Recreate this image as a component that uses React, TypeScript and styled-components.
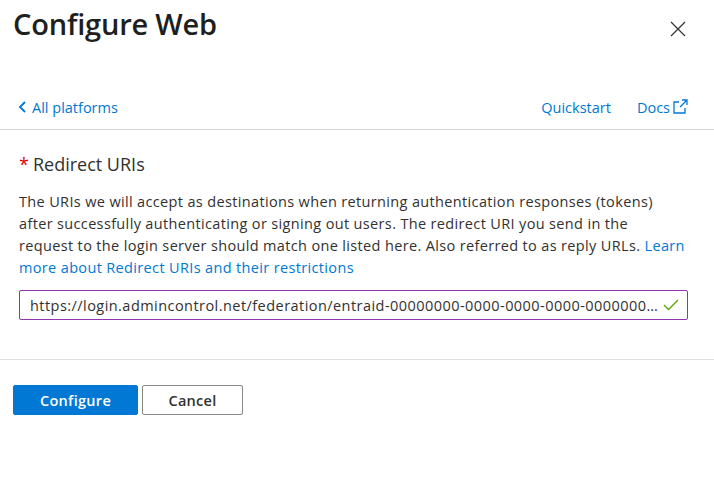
import styled, { createGlobalStyle } from 'styled-components';

const GlobalStyle = createGlobalStyle`
  html, body {
    margin: 0;
    padding: 0;
    background: #fff;
  }
  body {
    font-family: "Open Sans", "Noto Sans", Arial, sans-serif;
    color: #323130;
  }
`;

const Panel = styled.div`
  width: 714px;
  height: 479px;
  background: #fff;
  display: flex;
  flex-direction: column;
`;

const Header = styled.div`
  height: 85px;
  display: flex;
  justify-content: space-between;
  align-items: flex-start;
  padding: 4px 24px 0 13px;
  box-sizing: border-box;
`;

const Title = styled.h1`
  margin: 0;
  font-size: 29px;
  line-height: 40px;
  font-weight: 600;
  color: #201f1e;
  letter-spacing: -0.2px;
`;

const CloseButton = styled.button`
  border: none;
  background: transparent;
  padding: 0;
  margin-top: 13px;
  width: 24px;
  height: 24px;
  display: flex;
  align-items: center;
  justify-content: center;
  cursor: pointer;
`;

const NavRow = styled.div`
  height: 44px;
  display: flex;
  align-items: center;
  justify-content: space-between;
  padding: 0 26px 0 18px;
  border-bottom: 1px solid #d6d6d6;
`;

const LinkGroup = styled.div`
  display: flex;
  align-items: center;
  gap: 26px;
`;

const NavLink = styled.a`
  display: inline-flex;
  align-items: center;
  gap: 5px;
  font-size: 14.5px;
  color: #0078d4;
  text-decoration: none;
  cursor: pointer;
`;

const Body = styled.div`
  padding: 22px 4px 0 19px;
  height: 230px;
  box-sizing: border-box;
  border-bottom: 1px solid #e1dfdd;
`;

const FieldLabel = styled.div`
  font-size: 18px;
  line-height: 24px;
  color: #323130;
  display: flex;
  gap: 4px;
`;

const Required = styled.span`
  color: #e50000;
`;

const Description = styled.p`
  margin: 15px 0 0;
  font-size: 14.5px;
  line-height: 22px;
  letter-spacing: 0.35px;
  color: #323130;
  white-space: nowrap;
`;

const InlineLink = styled.a`
  color: #0078d4;
  text-decoration: none;
  cursor: pointer;
`;

const InputBox = styled.div`
  margin-top: 11px;
  height: 30px;
  width: 669px;
  box-sizing: border-box;
  border: 1px solid #8e35ad;
  border-radius: 2px;
  display: flex;
  align-items: center;
  padding: 0 8px 0 10px;
  gap: 2px;
`;

const InputText = styled.span`
  flex: 1;
  min-width: 0;
  font-size: 14.5px;
  letter-spacing: 0.45px;
  color: #323130;
  white-space: nowrap;
  overflow: hidden;
  text-overflow: ellipsis;
`;

const Footer = styled.div`
  padding: 25px 13px;
  display: flex;
  gap: 4px;
`;

const Button = styled.button<{ $primary?: boolean }>`
  height: 30px;
  box-sizing: border-box;
  border-radius: 2px;
  font-family: inherit;
  font-size: 14.5px;
  letter-spacing: 0.3px;
  font-weight: 600;
  padding: 0 16px;
  cursor: pointer;
  width: ${({ $primary }) => ($primary ? '125px' : '101px')};
  background: ${({ $primary }) => ($primary ? '#0078d4' : '#fff')};
  color: ${({ $primary }) => ($primary ? '#fff' : '#323130')};
  border: 1px solid ${({ $primary }) => ($primary ? '#0078d4' : '#8a8886')};
`;

const url =
  'https://login.admincontrol.net/federation/entraid-00000000-0000-0000-0000-000000000000/acs';

export default function App() {
  return (
    <Panel>
      <GlobalStyle />
      <Header>
        <Title>Configure Web</Title>
        <CloseButton aria-label="Close">
          <svg width="16" height="16" viewBox="0 0 16 16">
            <path d="M1 1 L15 15 M15 1 L1 15" stroke="#323130" strokeWidth="1.2" fill="none" />
          </svg>
        </CloseButton>
      </Header>
      <NavRow>
        <NavLink>
          <svg width="9" height="12" viewBox="0 0 9 12">
            <path d="M7 1 L2 6 L7 11" stroke="#0078d4" strokeWidth="1.8" fill="none" />
          </svg>
          All platforms
        </NavLink>
        <LinkGroup>
          <NavLink>Quickstart</NavLink>
          <NavLink>
            Docs
            <svg width="16" height="16" viewBox="0 0 16 16" style={{ marginLeft: -3 }}>
              <path d="M7 3 H2 V14 H13 V9" stroke="#0078d4" strokeWidth="1.3" fill="none" />
              <path d="M8 8 L15 1 M10 1 H15 V6" stroke="#0078d4" strokeWidth="1.3" fill="none" />
            </svg>
          </NavLink>
        </LinkGroup>
      </NavRow>
      <Body>
        <FieldLabel>
          <Required>*</Required>
          Redirect URIs
        </FieldLabel>
        <Description>
          The URIs we will accept as destinations when returning authentication responses (tokens)
          <br />
          after successfully authenticating or signing out users. The redirect URI you send in the
          <br />
          request to the login server should match one listed here. Also referred to as reply URLs.{' '}
          <InlineLink>
            Learn
            <br />
            more about Redirect URIs and their restrictions
          </InlineLink>
        </Description>
        <InputBox>
          <InputText>{url}</InputText>
          <svg width="16" height="14" viewBox="0 0 16 14">
            <path d="M1 7 L5.5 11.5 L15 2" stroke="#57a300" strokeWidth="1.3" fill="none" />
          </svg>
        </InputBox>
      </Body>
      <Footer>
        <Button $primary>Configure</Button>
        <Button>Cancel</Button>
      </Footer>
    </Panel>
  );
}
